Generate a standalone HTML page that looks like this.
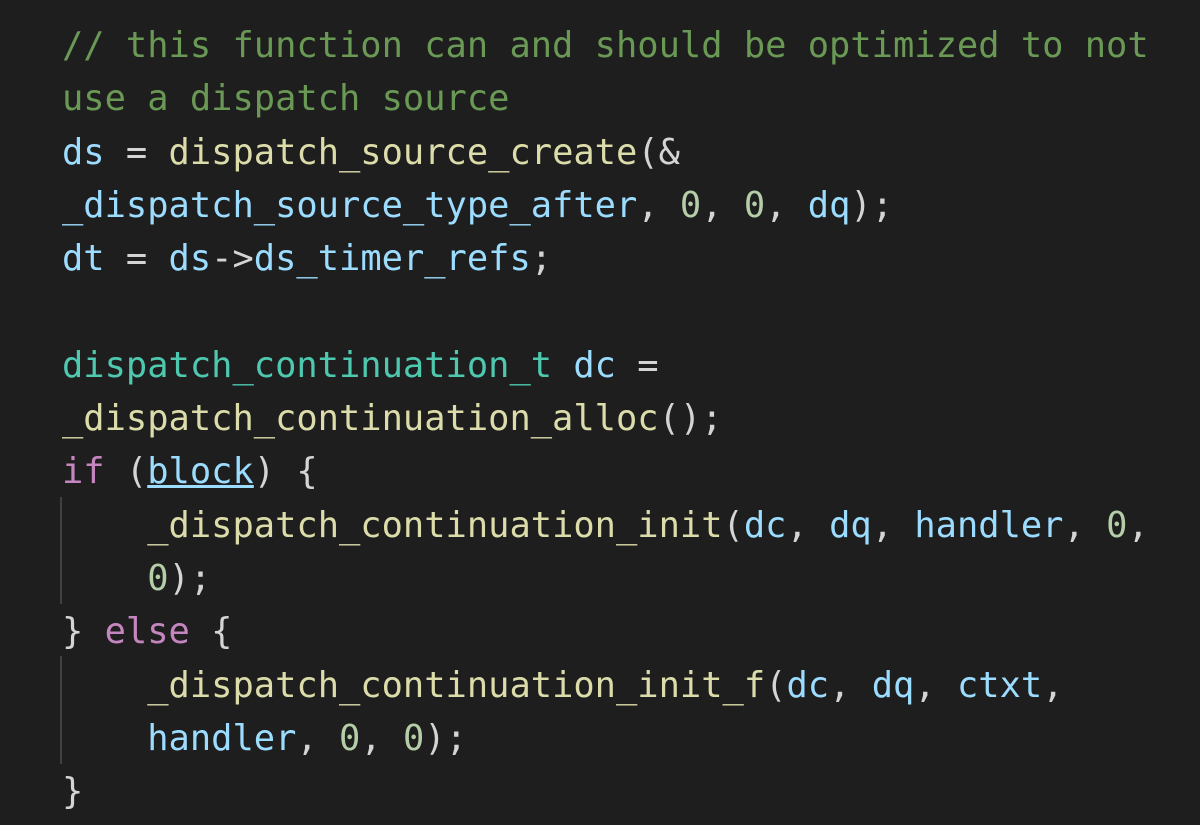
<!DOCTYPE html>
<html><head><style>
html,body{margin:0;padding:0;background:#1e1e1e;width:1200px;height:825px;overflow:hidden}
pre{margin:0;position:absolute;left:62px;top:19px;font-family:"DejaVu Sans Mono","Liberation Mono",monospace;font-size:35.4px;line-height:53.3px;color:#d4d4d4}
.c{color:#6a9955}.v{color:#9cdcfe}.f{color:#dcdcaa}.t{color:#4ec9b0}.k{color:#c586c0}.n{color:#b5cea8}
.g{position:absolute;left:60px;width:2px;background:#404040}
</style></head><body>
<div class="g" style="top:497px;height:107px"></div>
<div class="g" style="top:656px;height:108px"></div>
<pre><span class="c">// this function can and should be optimized to not</span>
<span class="c">use a dispatch source</span>
<span class="v">ds</span> = <span class="f">dispatch_source_create</span>(&amp;
<span class="v">_dispatch_source_type_after</span>, <span class="n">0</span>, <span class="n">0</span>, <span class="v">dq</span>);
<span class="v">dt</span> = <span class="v">ds</span>-&gt;<span class="v">ds_timer_refs</span>;

<span class="t">dispatch_continuation_t</span> <span class="v">dc</span> =
<span class="f">_dispatch_continuation_alloc</span>();
<span class="k">if</span> (<span class="v" style="text-decoration:underline">block</span>) {
    <span class="f">_dispatch_continuation_init</span>(<span class="v">dc</span>, <span class="v">dq</span>, <span class="v">handler</span>, <span class="n">0</span>,
    <span class="n">0</span>);
} <span class="k">else</span> {
    <span class="f">_dispatch_continuation_init_f</span>(<span class="v">dc</span>, <span class="v">dq</span>, <span class="v">ctxt</span>,
    <span class="v">handler</span>, <span class="n">0</span>, <span class="n">0</span>);
}</pre>
</body></html>
